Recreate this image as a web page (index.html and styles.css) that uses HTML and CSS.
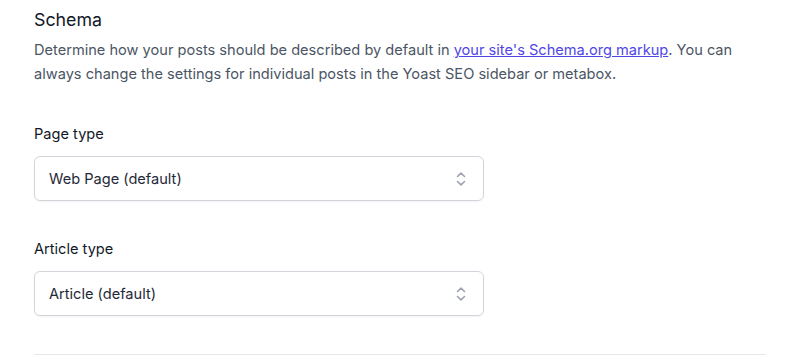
FILE: index.html
```html
<!DOCTYPE html>
<html>
<head>
<meta charset="utf-8">
<link rel="stylesheet" href="styles.css">
</head>
<body>
<section class="panel">
  <h2 class="title">Schema</h2>
  <p class="desc">Determine how your posts should be described by default in <a href="#" class="link">your site's Schema.org markup</a>. You can always change the settings for individual posts in the Yoast SEO sidebar or metabox.</p>
  <div class="field">
    <label class="label">Page type</label>
    <div class="select"><span>Web Page (default)</span>
      <svg class="chev" width="12" height="18" viewBox="0 0 12 18"><path d="M2.5 6.5 L6 3.2 L9.5 6.5 M2.5 11.5 L6 14.8 L9.5 11.5" fill="none" stroke="#9ca3af" stroke-width="1.6" stroke-linecap="round" stroke-linejoin="round"/></svg>
    </div>
  </div>
  <div class="field">
    <label class="label">Article type</label>
    <div class="select"><span>Article (default)</span>
      <svg class="chev" width="12" height="18" viewBox="0 0 12 18"><path d="M2.5 6.5 L6 3.2 L9.5 6.5 M2.5 11.5 L6 14.8 L9.5 11.5" fill="none" stroke="#9ca3af" stroke-width="1.6" stroke-linecap="round" stroke-linejoin="round"/></svg>
    </div>
  </div>
  <hr class="divider">
</section>
</body>
</html>
```
FILE: styles.css
```css
html, body { margin: 0; padding: 0; background: #fff; }
body { font-family: Inter, "Noto Sans", sans-serif; color: #1e293b; }
.panel { padding: 8px 34px 0 34px; width: 732px; }
.title { margin: 0; font-size: 17.8px; font-weight: 400; line-height: 24px; color: #111827; }
.desc { margin: 6px 0 0; font-size: 14.6px; line-height: 24px; color: #4b5563; width: 720px; }
.link { color: #4f46e5; text-decoration: underline; }
.field { margin-top: 38px; display: flex; flex-direction: column; }
.label { font-size: 14.6px; line-height: 20px; color: #111827; margin-bottom: 12px; }
.select { width: 450px; height: 45px; box-sizing: border-box; border: 1px solid #d1d5db; border-radius: 6px; display: flex; align-items: center; justify-content: space-between; padding: 0 16px 0 14px; font-size: 14.6px; color: #1f2937; box-shadow: 0 1px 2px rgba(0,0,0,0.05); }
.chev { display: block; }
.divider { margin: 38px 0 0; border: 0; border-top: 1px solid #e5e7eb; }
```
